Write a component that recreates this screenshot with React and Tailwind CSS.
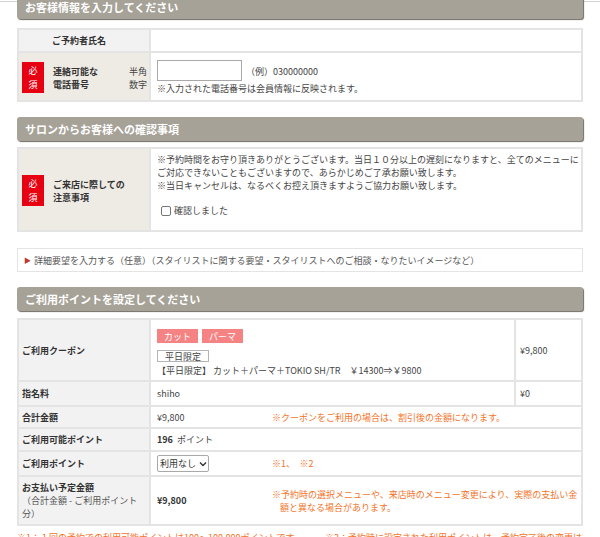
const font = { fontFamily: '"Noto Sans CJK JP", "Noto Sans", sans-serif' };

function SectionHeader({ children, className = "" }) {
  return (
    <div
      className={`relative h-[24px] flex items-center px-[8px] bg-[#a6a297] rounded-[3px] shadow-[1px_1px_1px_#6f6c64] text-white font-bold text-[11px] ${className}`}
    >
      {children}
    </div>
  );
}

function Required() {
  return (
    <div className="w-[22px] h-[31px] bg-[#e60012] text-white text-[9px] flex flex-col items-center justify-center leading-[14px] shrink-0">
      <span>必</span>
      <span>須</span>
    </div>
  );
}

function Orange({ children, className = "" }) {
  return <div className={`text-[#f3742a] ${className}`}>{children}</div>;
}

function Row({ label, children, last = false, price, className = "" }) {
  return (
    <div className={`flex ${last ? "" : "border-b-2 border-[#e4e4e4]"} ${className}`}>
      <div className="w-[132px] shrink-0 bg-[#f2f2f2] border-r-2 border-[#e4e4e4] font-bold text-[#333] flex items-center pl-[3px]">
        {label}
      </div>
      <div className="flex-1 flex items-center pl-[6px] text-[#444]">{children}</div>
      {price !== undefined && (
        <div className="w-[67px] shrink-0 border-l-2 border-[#e4e4e4] flex items-center pl-[4px] text-[#444]">
          {price}
        </div>
      )}
    </div>
  );
}

export default function App() {
  return (
    <div className="w-[600px] h-[537px] overflow-hidden bg-white text-[9px] leading-[13px]" style={font}>
      <div className="mt-[1px] border-t border-[#d4d4d4]">
        <div className="mx-[17px] -mt-[7px]">
          <SectionHeader className="pt-[1px]">お客様情報を入力してください</SectionHeader>

          {/* お客様情報 */}
          <div className="mt-[9px] border-2 border-[#e4e4e4]">
            <div className="flex h-[23px] border-b-2 border-[#e4e4e4]">
              <div className="w-[132px] shrink-0 bg-[#f2f2f2] border-r-2 border-[#e4e4e4] font-bold text-[#333] flex items-center pl-[33px]">
                ご予約者氏名
              </div>
              <div className="flex-1" />
            </div>
            <div className="flex h-[47px]">
              <div className="w-[132px] shrink-0 bg-[#eeebe5] border-r-2 border-[#e4e4e4] flex items-center pl-[3px] pr-[2px] pt-[2px]">
                <Required />
                <div className="ml-[9px] font-bold text-[#333]">
                  <div>連絡可能な</div>
                  <div>電話番号</div>
                </div>
                <div className="ml-auto text-[#444] text-right">
                  <div>半角</div>
                  <div>数字</div>
                </div>
              </div>
              <div className="flex-1 pl-[6px] pt-[7px] text-[#444]">
                <div className="flex items-center">
                  <div className="w-[85px] h-[21px] border border-[#a9a9a9] bg-white" />
                  <span className="ml-[4px] mt-[1px]">（例）030000000</span>
                </div>
                <div className="mt-[1px]">※入力された電話番号は会員情報に反映されます。</div>
              </div>
            </div>
          </div>

          <SectionHeader className="mt-[15px]">サロンからお客様への確認事項</SectionHeader>

          {/* 確認事項 */}
          <div className="mt-[6px] border-2 border-[#e4e4e4] flex h-[85px]">
            <div className="w-[132px] shrink-0 bg-[#eeebe5] border-r-2 border-[#e4e4e4] flex items-center pl-[3px] pt-[2px]">
              <Required />
              <div className="ml-[9px] font-bold text-[#333]">
                <div>ご来店に際しての</div>
                <div>注意事項</div>
              </div>
            </div>
            <div className="flex-1 pl-[6px] pt-[4px] text-[#444] whitespace-nowrap">
              <div>※予約時間をお守り頂きありがとうございます。当日１０分以上の遅刻になりますと、全てのメニューに</div>
              <div>ご対応できないこともございますので、あらかじめご了承お願い致します。</div>
              <div>※当日キャンセルは、なるべくお控え頂きますようご協力お願い致します。</div>
              <label className="flex items-center mt-[12px] ml-[4px]">
                <span className="w-[10px] h-[10px] border border-[#767676] rounded-[2px] bg-white" />
                <span className="ml-[3px]">確認しました</span>
              </label>
            </div>
          </div>

          {/* 詳細要望 */}
          <div className="mt-[16px] h-[24px] border border-[#e4e4e4] flex items-center pl-[6px] text-[#555]">
            <span className="text-[#c0392b] text-[7px] mr-[3px]">▶</span>
            <span>詳細要望を入力する（任意）（スタイリストに関する要望・スタイリストへのご相談・なりたいイメージなど）</span>
          </div>

          <SectionHeader className="mt-[15px]">ご利用ポイントを設定してください</SectionHeader>

          {/* ポイント */}
          <div className="mt-[7px] border-2 border-[#e4e4e4]">
            <Row label="ご利用クーポン" className="h-[62px]" price="¥9,800">
              <div className="pt-[6px]">
                <div className="flex gap-[4px]">
                  <span className="w-[41px] h-[14px] bg-[#f58383] text-white flex items-center justify-center">カット</span>
                  <span className="w-[41px] h-[14px] bg-[#f58383] text-white flex items-center justify-center">パーマ</span>
                </div>
                <div className="mt-[7px] w-[52px] h-[12px] border border-[#b5b5b5] flex items-center justify-center text-[#444]">
                  平日限定
                </div>
                <div className="mt-[2px]">【平日限定】 カット＋パーマ＋TOKIO SH/TR　￥14300⇒￥9800</div>
              </div>
            </Row>
            <Row label="指名料" className="h-[25px]" price="¥0">
              shiho
            </Row>
            <Row label="合計金額" className="h-[22px]">
              <div className="w-[115px] shrink-0">¥9,800</div>
              <Orange>※クーポンをご利用の場合は、割引後の金額になります。</Orange>
            </Row>
            <Row label="ご利用可能ポイント" className="h-[23px]">
              <span className="font-bold text-[#333] mr-[4px]">196</span>ポイント
            </Row>
            <Row label="ご利用ポイント" className="h-[25px]">
              <div className="w-[115px] shrink-0">
                <div className="w-[52px] h-[17px] border border-[#a9a9a9] rounded-[2px] flex items-center pl-[2px] text-[#333]">
                  利用なし
                  <svg width="8" height="6" viewBox="0 0 8 6" className="ml-[3px]">
                    <path d="M1 1.5 L4 4.5 L7 1.5" fill="none" stroke="#333" strokeWidth="1.4" />
                  </svg>
                </div>
              </div>
              <Orange>※1、　※2</Orange>
            </Row>
            <Row label={
              <div>
                <div>お支払い予定金額</div>
                <div className="font-normal text-[#555]">（合計金額 - ご利用ポイント</div>
                <div className="font-normal text-[#555]">分）</div>
              </div>
            } className="h-[47px]" last>
              <div className="w-[115px] shrink-0 font-bold text-[#333]">¥9,800</div>
              <Orange className="flex-1 pl-[8px] -indent-[8px] pr-[1px]">
                ※予約時の選択メニューや、来店時のメニュー変更により、実際の支払い金額と異なる場合があります。
              </Orange>
            </Row>
          </div>

          <Orange className="mt-[5px] h-[8px] overflow-hidden whitespace-nowrap">
            ※1：１回の予約での利用可能ポイントは100～100,000ポイントです。　　　※2：予約時に設定された利用ポイントは、予約完了後の変更はできません。
          </Orange>
          <div className="border-t border-[#555]" />
        </div>
      </div>
    </div>
  );
}
